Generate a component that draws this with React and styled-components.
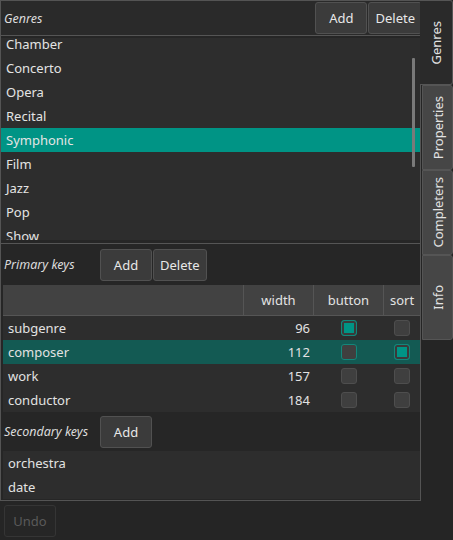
import React from 'react';
import styled, { createGlobalStyle } from 'styled-components';

const GlobalStyle = createGlobalStyle`
  body {
    margin: 0;
    background: #252525;
    font-family: "Noto Sans", "Open Sans", sans-serif;
    font-size: 13px;
    color: #e2e2e2;
  }
`;

const genres = ['Chamber', 'Concerto', 'Opera', 'Recital', 'Symphonic', 'Film', 'Jazz', 'Pop', 'Show'];

const primaryKeys = [
  { name: 'subgenre', width: 96, button: true, sort: false },
  { name: 'composer', width: 112, button: false, sort: true, selected: true },
  { name: 'work', width: 157, button: false, sort: false },
  { name: 'conductor', width: 184, button: false, sort: false },
];

const secondaryKeys = ['orchestra', 'date'];

const tabs = [
  { label: 'Genres', active: true },
  { label: 'Properties' },
  { label: 'Completers' },
  { label: 'Info' },
];

function App() {
  return (
    <>
      <GlobalStyle />
      <Page>
        <Main>
          <Panel>
            <GenresHeader>
              <SectionLabel>Genres</SectionLabel>
              <ButtonGroup>
                <Button>Add</Button>
                <Button>Delete</Button>
              </ButtonGroup>
            </GenresHeader>
            <GenresList>
              <ListInner>
                {genres.map((g) => (
                  <GenreItem key={g} $selected={g === 'Symphonic'}>{g}</GenreItem>
                ))}
              </ListInner>
              <ScrollThumb />
            </GenresList>
            <SplitLine />
            <KeyBar $height={41}>
              <KeyLabel>Primary keys</KeyLabel>
              <ButtonGroup>
                <Button>Add</Button>
                <Button>Delete</Button>
              </ButtonGroup>
            </KeyBar>
            <Table>
              <HeaderRow>
                <HeadCell />
                <HeadCell $center>width</HeadCell>
                <HeadCell $center>button</HeadCell>
                <HeadCell $center $last>sort</HeadCell>
              </HeaderRow>
              {primaryKeys.map((k) => (
                <Row key={k.name} $selected={k.selected}>
                  <NameCell>{k.name}</NameCell>
                  <NumCell>{k.width}</NumCell>
                  <BoxCell>
                    <Check $checked={k.button} $focus={k.selected} />
                  </BoxCell>
                  <BoxCell>
                    <Check $checked={k.sort} $focus={k.sort} />
                  </BoxCell>
                </Row>
              ))}
            </Table>
            <KeyBar $height={39}>
              <KeyLabel>Secondary keys</KeyLabel>
              <Button>Add</Button>
            </KeyBar>
            <SecondaryList>
              {secondaryKeys.map((s) => (
                <SecondaryItem key={s}>{s}</SecondaryItem>
              ))}
            </SecondaryList>
          </Panel>
          <Footer>
            <Button disabled>Undo</Button>
          </Footer>
        </Main>
        <TabBar>
          {tabs.map((t) => (
            <Tab key={t.label} $active={t.active}>
              <TabText>{t.label}</TabText>
            </Tab>
          ))}
        </TabBar>
      </Page>
    </>
  );
}

const Page = styled.div`
  display: flex;
  width: 453px;
  height: 540px;
  background: #252525;
  overflow: hidden;
`;

const Main = styled.div`
  display: flex;
  flex-direction: column;
  width: 421px;
`;

const Panel = styled.div`
  display: flex;
  flex-direction: column;
  border: 1px solid #545454;
  background: #262626;
  padding-bottom: 1px;
`;

const GenresHeader = styled.div`
  display: flex;
  align-items: center;
  justify-content: space-between;
  height: 34px;
  padding-left: 3px;
  background: #2a2a2a;
  border-bottom: 1px solid #555;
  margin-bottom: 2px;
  margin-right: -2px;
`;

const SectionLabel = styled.span`
  font-style: italic;
  font-size: 12.5px;
  color: #dcdcdc;
`;

const ButtonGroup = styled.div`
  display: flex;
  gap: 1px;
`;

const Button = styled.button`
  height: 32px;
  min-width: 52px;
  padding: 0 6px;
  background: ${(p) => (p.disabled ? '#262626' : '#3b3b3b')};
  border: 1px solid ${(p) => (p.disabled ? '#353535' : '#515151')};
  border-radius: 3px;
  color: ${(p) => (p.disabled ? '#5a5a5a' : '#e8e8e8')};
  font-family: inherit;
  font-size: 13px;
`;

const GenresList = styled.div`
  position: relative;
  height: 202px;
  overflow: hidden;
  background: #2d2d2d;
`;

const ListInner = styled.div`
  margin-top: -6px;
`;

const GenreItem = styled.div`
  height: 24px;
  line-height: 24px;
  padding-left: 5px;
  background: ${(p) => (p.$selected ? '#009485' : 'transparent')};
  color: #e4e4e4;
`;

const ScrollThumb = styled.div`
  position: absolute;
  left: 411px;
  top: 20px;
  width: 3px;
  height: 109px;
  background: #7a7a7a;
  border-radius: 1px;
`;

const SplitLine = styled.div`
  margin-top: 3px;
  border-bottom: 1px solid #555;
`;

const KeyBar = styled.div`
  display: flex;
  align-items: center;
  height: ${(p) => p.$height}px;
  padding-left: 3px;
`;

const KeyLabel = styled.span`
  width: 96px;
  font-style: italic;
  font-size: 12.5px;
  color: #dcdcdc;
`;

const Table = styled.div`
  display: flex;
  flex-direction: column;
  margin-left: 2px;
  background: #2d2d2d;
`;

const columns = '241px 70px 70px 1fr';

const HeaderRow = styled.div`
  display: grid;
  grid-template-columns: ${columns};
  height: 30px;
  background: #424242;
  border-bottom: 1px solid #555;
`;

const HeadCell = styled.div`
  display: flex;
  align-items: center;
  justify-content: ${(p) => (p.$center ? 'center' : 'flex-start')};
  border-right: ${(p) => (p.$last ? 'none' : '1px solid #555')};
  color: #e2e2e2;
`;

const Row = styled.div`
  display: grid;
  grid-template-columns: ${columns};
  height: 24px;
  align-items: center;
  background: ${(p) => (p.$selected ? '#135a53' : 'transparent')};
`;

const NameCell = styled.div`
  padding-left: 5px;
`;

const NumCell = styled.div`
  text-align: right;
  padding-right: 4px;
`;

const BoxCell = styled.div`
  display: flex;
  justify-content: center;
`;

const Check = styled.div`
  box-sizing: border-box;
  width: 16px;
  height: 16px;
  border-radius: 3px;
  background: ${(p) => (p.$checked ? '#009485' : '#3f3f3f')};
  border: 1px solid ${(p) => (p.$focus || p.$checked ? '#12877b' : '#4e4e4e')};
  box-shadow: ${(p) => (p.$checked ? 'inset 0 0 0 2px #3a3a3a' : 'none')};
`;

const SecondaryList = styled.div`
  margin-left: 2px;
  height: 48px;
  background: #2d2d2d;
`;

const SecondaryItem = styled.div`
  height: 24px;
  line-height: 24px;
  padding-left: 5px;
`;

const Footer = styled.div`
  padding: 4px 4px;
`;

const TabBar = styled.div`
  display: flex;
  flex-direction: column;
  width: 32px;
`;

const Tab = styled.div`
  box-sizing: border-box;
  height: 85px;
  display: flex;
  align-items: center;
  justify-content: center;
  background: ${(p) => (p.$active ? '#2a2a2a' : '#464646')};
  border: 1px solid #555;
  border-left: ${(p) => (p.$active ? 'none' : '1px solid #555')};
  margin-left: ${(p) => (p.$active ? '-1px' : '1px')};
  border-radius: 0 3px 3px 0;
  color: #e2e2e2;
`;

const TabText = styled.span`
  writing-mode: vertical-rl;
  transform: rotate(180deg);
  font-size: 13px;
`;

export default App;
